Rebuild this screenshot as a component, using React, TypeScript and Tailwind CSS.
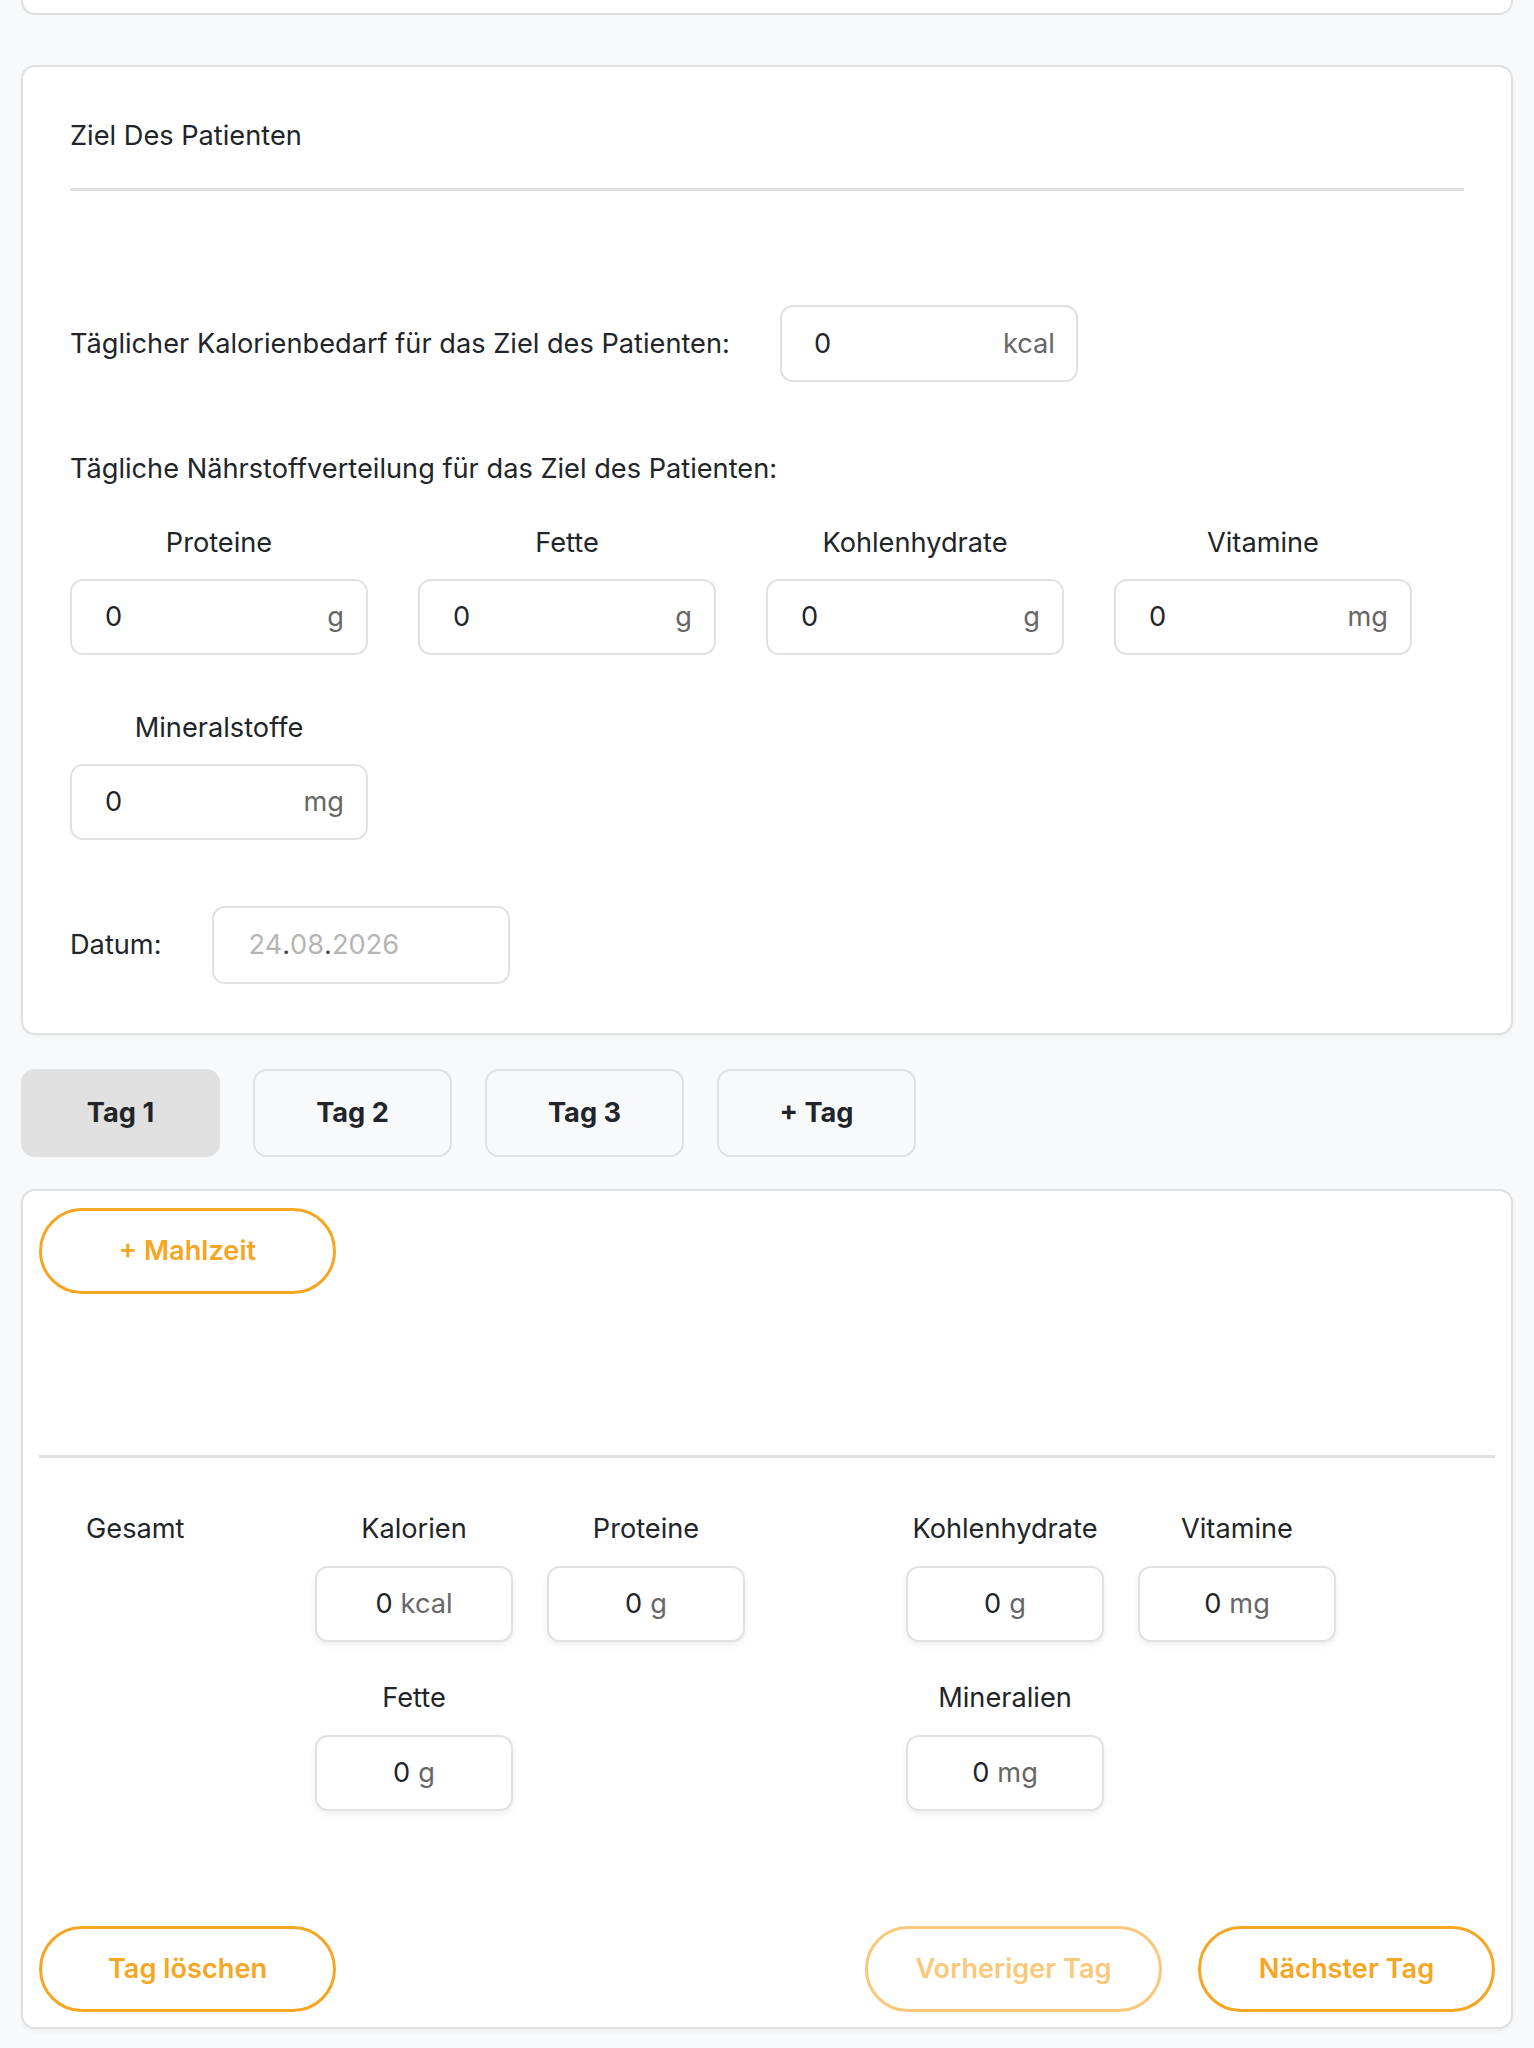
import React from "react";

const nutrients = [
  { label: "Proteine", unit: "g" },
  { label: "Fette", unit: "g" },
  { label: "Kohlenhydrate", unit: "g" },
  { label: "Vitamine", unit: "mg" },
  { label: "Mineralstoffe", unit: "mg" },
];

function UnitInput({ unit }: { unit: string }) {
  return (
    <div className="w-[298px] h-[76px] border-2 border-[#e1e1e1] rounded-[13px] bg-white flex items-center justify-between pl-[33px] pr-[22px]">
      <span className="text-[#212529]">0</span>
      <span className="text-[#666]">{unit}</span>
    </div>
  );
}

function TotalBox({ label, unit }: { label: string; unit: string }) {
  return (
    <div className="flex flex-col items-center">
      <div className="h-[36px] leading-[36px] text-[#212529]">{label}</div>
      <div className="mt-[19px] w-[198px] h-[76px] border-2 border-[#e1e1e1] rounded-[13px] bg-white shadow-[0_3px_6px_rgba(0,0,0,0.07)] flex items-center justify-center">
        <span className="text-[#212529]">0</span>
        <span className="text-[#666] ml-[8px]">{unit}</span>
      </div>
    </div>
  );
}

export default function App() {
  const days = ["Tag 1", "Tag 2", "Tag 3", "+ Tag"];

  return (
    <div className="min-h-screen bg-[#f8f9fa] px-[21px] text-[27.2px] leading-[36px] font-['Inter',sans-serif]">
      {/* previous card, cut off at the top */}
      <div className="h-[15px] bg-white border-2 border-t-0 border-[#dedede] rounded-b-[14px]" />

      {/* Ziel des Patienten */}
      <div className="mt-[50px] bg-white border-2 border-[#e0e0e0] rounded-[14px] shadow-[0_2px_4px_rgba(0,0,0,0.04)] px-[47px] pt-[51px] pb-[49px]">
        <div className="text-[#212529]">Ziel Des Patienten</div>
        <div className="mt-[34px] h-[3px] bg-[#e0e0e0]" />

        <div className="mt-[114px] flex items-center gap-[50px]">
          <span className="text-[#212529]">Täglicher Kalorienbedarf für das Ziel des Patienten:</span>
          <div className="w-[298px] h-[77px] border-2 border-[#e1e1e1] rounded-[13px] flex items-center justify-between pl-[32px] pr-[21px]">
            <span className="text-[#212529]">0</span>
            <span className="text-[#666]">kcal</span>
          </div>
        </div>

        <div className="mt-[69px] text-[#212529]">Tägliche Nährstoffverteilung für das Ziel des Patienten:</div>

        <div className="mt-[38px] flex flex-wrap gap-x-[50px] gap-y-[55px]">
          {nutrients.map((n) => (
            <div key={n.label} className="flex flex-col items-center">
              <div className="h-[36px] text-[#212529]">{n.label}</div>
              <div className="mt-[18px]">
                <UnitInput unit={n.unit} />
              </div>
            </div>
          ))}
        </div>

        <div className="mt-[66px] flex items-center gap-[50px]">
          <span className="text-[#212529]">Datum:</span>
          <div className="w-[298px] h-[78px] border-2 border-[#e1e1e1] rounded-[13px] flex items-center pl-[35px] text-[#b5b5b5]">
            24<span className="text-[#444]">.</span>08<span className="text-[#444]">.</span>2026
          </div>
        </div>
      </div>

      {/* Tage */}
      <div className="mt-[34px] flex gap-[33px]">
        {days.map((d, i) => (
          <button
            key={d}
            className={`w-[199px] h-[88px] rounded-[14px] font-bold text-[#212529] ${
              i === 0 ? "bg-[#e0e0e0]" : "border-2 border-[#e1e1e1] bg-[#f8f9fa]"
            }`}
          >
            {d}
          </button>
        ))}
      </div>

      {/* Tagesplan */}
      <div className="mt-[32px] mb-[22px] bg-white border-2 border-[#e0e0e0] rounded-[14px] shadow-[0_2px_4px_rgba(0,0,0,0.05)] px-[16px] pt-[17px] pb-[15px]">
        <button className="w-[297px] h-[86px] rounded-full border-[3px] border-[#f5a623] text-[#f5a623] font-semibold">
          + Mahlzeit
        </button>

        <div className="mt-[161px] h-[3px] bg-[#e0e0e0]" />

        <div className="mt-[53px] flex">
          <div className="ml-[47px] w-[229px] h-[36px] text-[#212529]">Gesamt</div>
          <div className="w-[430px] grid grid-cols-2 gap-x-[34px] gap-y-[38px]">
            <TotalBox label="Kalorien" unit="kcal" />
            <TotalBox label="Proteine" unit="g" />
            <TotalBox label="Fette" unit="g" />
          </div>
          <div className="ml-[161px] w-[430px] grid grid-cols-2 gap-x-[34px] gap-y-[38px]">
            <TotalBox label="Kohlenhydrate" unit="g" />
            <TotalBox label="Vitamine" unit="mg" />
            <TotalBox label="Mineralien" unit="mg" />
          </div>
        </div>

        <div className="mt-[115px] flex justify-between">
          <button className="w-[297px] h-[86px] rounded-full border-[3px] border-[#f5a623] text-[#f5a623] font-semibold">
            Tag löschen
          </button>
          <div className="flex gap-[36px]">
            <button className="w-[297px] h-[86px] rounded-full border-[3px] border-[#f5a623] text-[#f5a623] font-semibold opacity-60">
              Vorheriger Tag
            </button>
            <button className="w-[297px] h-[86px] rounded-full border-[3px] border-[#f5a623] text-[#f5a623] font-semibold">
              Nächster Tag
            </button>
          </div>
        </div>
      </div>
    </div>
  );
}
